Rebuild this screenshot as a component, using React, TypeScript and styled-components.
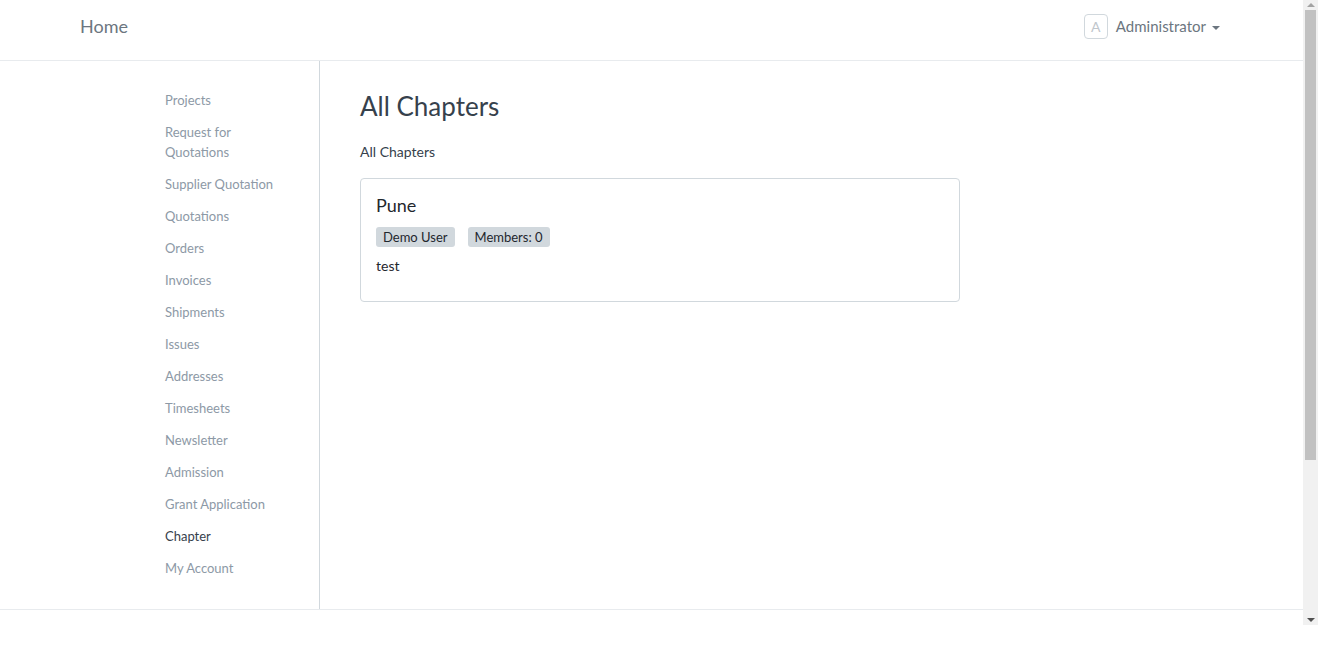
import React from "react";
import styled, { createGlobalStyle } from "styled-components";

const Global = createGlobalStyle`
  html, body { margin: 0; padding: 0; background: #fff; }
  body { font-family: "Lato", "Noto Sans", sans-serif; color: #36414c; }
  * { box-sizing: border-box; }
`;

const Frame = styled.div`
  height: 625px;
  display: flex;
  background: #fff;
`;

const Page = styled.div`
  flex: 1;
  min-width: 0;
  overflow: hidden;
`;

const ScrollTrack = styled.div`
  width: 15px;
  flex-shrink: 0;
  background: #f1f1f1;
  display: flex;
  flex-direction: column;
  align-items: center;
`;

const ArrowButton = styled.div<{ $down?: boolean; $color: string }>`
  height: 10px;
  width: 100%;
  display: flex;
  align-items: center;
  justify-content: center;
  &::after {
    content: "";
    width: 0;
    height: 0;
    border-left: 4px solid transparent;
    border-right: 4px solid transparent;
    ${(p) =>
      p.$down
        ? `border-top: 4px solid ${p.$color};`
        : `border-bottom: 4px solid ${p.$color};`}
  }
`;

const Thumb = styled.div`
  width: 11px;
  height: 450px;
  background: #c1c1c1;
`;

const Spacer = styled.div`
  flex: 1;
`;

const Navbar = styled.header`
  height: 61px;
  border-bottom: 1px solid #e8ebee;
  display: flex;
  align-items: center;
  justify-content: space-between;
  padding: 0 83px 8px 80px;
`;

const Brand = styled.a`
  font-size: 18px;
  color: #6c7680;
  text-decoration: none;
`;

const UserMenu = styled.div`
  display: flex;
  align-items: center;
  gap: 8px;
  font-size: 15px;
  color: #6c7680;
`;

const Avatar = styled.span`
  width: 24px;
  height: 25px;
  border: 1px solid #d1d8dd;
  border-radius: 4px;
  display: flex;
  align-items: center;
  justify-content: center;
  font-size: 14px;
  color: #c0c6cc;
`;

const Caret = styled.span`
  display: inline-block;
  width: 0;
  height: 0;
  margin-left: 6px;
  border-top: 4px solid #6c7680;
  border-left: 4px solid transparent;
  border-right: 4px solid transparent;
  vertical-align: middle;
`;

const Body = styled.div`
  display: flex;
  border-bottom: 1px solid #e8ebee;
`;

const Sidebar = styled.aside`
  width: 320px;
  flex-shrink: 0;
  border-right: 1px solid #d1d8dd;
  padding: 23px 0 25px 165px;
`;

const NavList = styled.nav`
  width: 118px;
  display: flex;
  flex-direction: column;
`;

const NavItem = styled.a<{ $active?: boolean }>`
  font-size: 13px;
  line-height: 20px;
  padding: 6px 0;
  color: ${(p) => (p.$active ? "#36414c" : "#8d99a6")};
  text-decoration: none;
`;

const Main = styled.main`
  flex: 1;
  padding: 24px 40px;
`;

const Title = styled.h1`
  font-size: 26px;
  font-weight: 400;
  line-height: 31px;
  margin: 6px 0 0;
  color: #36414c;
`;

const Subtitle = styled.p`
  font-size: 14px;
  line-height: 20px;
  margin: 20px 0 0;
  color: #36414c;
`;

const Card = styled.div`
  width: 600px;
  margin-top: 16px;
  border: 1px solid #d1d8dd;
  border-radius: 4px;
  padding: 15px 15px 25px;
  color: #1f272e;
`;

const CardTitle = styled.h3`
  font-size: 18px;
  font-weight: 400;
  line-height: 22px;
  margin: 0;
`;

const Badges = styled.div`
  display: flex;
  gap: 13px;
  margin-top: 11px;
`;

const Badge = styled.span`
  font-size: 13px;
  line-height: 20px;
  padding: 0 7px;
  border-radius: 3px;
  background: #d1d8dd;
  color: #1f272e;
`;

const CardText = styled.p`
  font-size: 14px;
  line-height: 20px;
  margin: 9px 0 0;
`;

const items = [
  "Projects",
  "Request for Quotations",
  "Supplier Quotation",
  "Quotations",
  "Orders",
  "Invoices",
  "Shipments",
  "Issues",
  "Addresses",
  "Timesheets",
  "Newsletter",
  "Admission",
  "Grant Application",
  "Chapter",
  "My Account",
];

export default function App() {
  return (
    <>
      <Global />
      <Frame>
        <Page>
          <Navbar>
            <Brand href="#">Home</Brand>
            <UserMenu>
              <Avatar>A</Avatar>
              <span>
                Administrator
                <Caret />
              </span>
            </UserMenu>
          </Navbar>
          <Body>
            <Sidebar>
              <NavList>
                {items.map((it) => (
                  <NavItem key={it} href="#" $active={it === "Chapter"}>
                    {it}
                  </NavItem>
                ))}
              </NavList>
            </Sidebar>
            <Main>
              <Title>All Chapters</Title>
              <Subtitle>All Chapters</Subtitle>
              <Card>
                <CardTitle>Pune</CardTitle>
                <Badges>
                  <Badge>Demo User</Badge>
                  <Badge>Members: 0</Badge>
                </Badges>
                <CardText>test</CardText>
              </Card>
            </Main>
          </Body>
        </Page>
        <ScrollTrack>
          <ArrowButton $color="#a3a3a3" />
          <Thumb />
          <Spacer />
          <ArrowButton $down $color="#505050" />
        </ScrollTrack>
      </Frame>
    </>
  );
}
